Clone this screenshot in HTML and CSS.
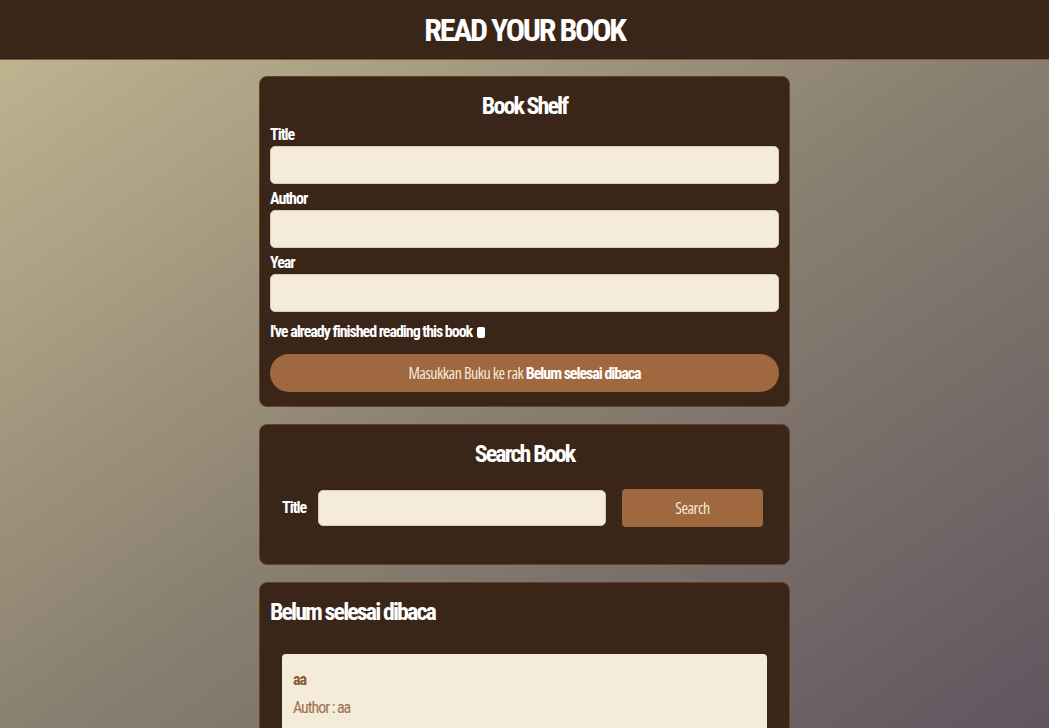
FILE: index.html
```html
<!DOCTYPE html>
<html lang="en">
<head>
<meta charset="utf-8">
<title>Bookshelf Apps</title>
<link rel="stylesheet" href="styles.css">
</head>
<body>
<header class="topbar">
  <h1 class="topbar-title">READ YOUR BOOK</h1>
</header>
<main class="main">
  <section class="card">
    <h2 class="card-title">Book Shelf</h2>
    <form class="book-form">
      <div class="field">
        <label class="field-label" for="inputBookTitle">Title</label>
        <input class="field-input" id="inputBookTitle" type="text">
      </div>
      <div class="field">
        <label class="field-label" for="inputBookAuthor">Author</label>
        <input class="field-input" id="inputBookAuthor" type="text">
      </div>
      <div class="field">
        <label class="field-label" for="inputBookYear">Year</label>
        <input class="field-input" id="inputBookYear" type="number">
      </div>
      <div class="check-row">
        <label class="field-label" for="inputBookIsComplete">I've already finished reading this book</label>
        <input class="check" id="inputBookIsComplete" type="checkbox">
      </div>
      <button class="submit-btn" type="button">Masukkan Buku ke rak <span class="submit-strong">Belum selesai dibaca</span></button>
    </form>
  </section>

  <section class="card">
    <h2 class="card-title">Search Book</h2>
    <form class="search-form">
      <label class="field-label search-label" for="searchBookTitle">Title</label>
      <input class="field-input search-input" id="searchBookTitle" type="text">
      <button class="search-btn" type="button">Search</button>
    </form>
  </section>

  <section class="card">
    <h2 class="card-title card-title-left">Belum selesai dibaca</h2>
    <div class="book-list">
      <article class="book-item">
        <h3 class="book-title">aa</h3>
        <p class="book-meta">Author : aa</p>
      </article>
    </div>
  </section>
</main>
</body>
</html>
```
FILE: styles.css
```css
html {
  min-height: 100%;
  background: linear-gradient(to bottom right, #c2b892 0%, #8b8171 50%, #5f5660 100%) fixed;
}

body {
  margin: 0;
  font-family: Roboto, "Liberation Sans", Arial, sans-serif;
  font-stretch: 75%;
  letter-spacing: -0.065em;
  color: #ffffff;
}

.topbar {
  box-sizing: border-box;
  height: 60px;
  padding: 12px 0 10px;
  background: #3a2618;
  border-bottom: 1px solid #7a5c3e;
  text-align: center;
}

.topbar-title {
  margin: 0;
  font-size: 32px;
  line-height: 37px;
  font-weight: bold;
  letter-spacing: -0.07em;
}

.main {
  width: 531px;
  margin: 16px auto 0;
  display: flex;
  flex-direction: column;
  gap: 17px;
}

.card {
  background: #3a2618;
  border: 1px solid #6b4125;
  border-radius: 8px;
  padding: 10px;
}

.card-title {
  margin: 5px 0 6px;
  font-size: 24px;
  line-height: 28px;
  font-weight: bold;
  letter-spacing: -0.08em;
  text-align: center;
}

.card-title-left {
  text-align: left;
}

.book-form {
  display: flex;
  flex-direction: column;
}

.field {
  display: flex;
  flex-direction: column;
  gap: 2px;
  margin-bottom: 6px;
}

.field-label {
  font-size: 16px;
  line-height: 18px;
  font-weight: bold;
}

.field-input {
  box-sizing: border-box;
  height: 38px;
  margin: 0;
  padding: 0 10px;
  background: #f4ebd9;
  border: 1px solid #d8ccb3;
  border-radius: 5px;
  font-family: inherit;
  font-size: 16px;
  color: #3a2618;
}

.check-row {
  display: flex;
  align-items: center;
  margin-top: 5px;
}

.check {
  appearance: none;
  -webkit-appearance: none;
  width: 8px;
  height: 11px;
  margin: 0 0 0 5px;
  background: #ffffff;
  border-radius: 2px;
}

.submit-btn {
  height: 38px;
  margin: 13px 0 4px;
  background: #a0683f;
  border: none;
  border-radius: 19px;
  color: #f4ebd9;
  font-family: "Open Sans", sans-serif;
  font-stretch: 75%;
  font-size: 16px;
  letter-spacing: -0.03em;
}

.submit-strong {
  font-family: Roboto, "Liberation Sans", Arial, sans-serif;
  font-weight: bold;
  letter-spacing: -0.065em;
  color: #ffffff;
}

.search-form {
  display: flex;
  align-items: center;
  padding: 15px 16px 27px 12px;
}

.search-label {
  margin-right: 12px;
}

.search-input {
  flex: 1;
  height: 36px;
  margin-right: 16px;
}

.search-btn {
  width: 141px;
  height: 38px;
  background: #a0683f;
  border: none;
  border-radius: 4px;
  color: #f4ebd9;
  font-family: "Open Sans", sans-serif;
  font-stretch: 75%;
  font-size: 16px;
  letter-spacing: -0.03em;
}

.book-list {
  padding: 22px 12px 0;
}

.book-item {
  background: #f4ebd9;
  border-radius: 4px;
  padding: 17px 11px 16px;
}

.book-title {
  margin: 0 0 10px;
  font-size: 16px;
  line-height: 18px;
  font-weight: bold;
  color: #8b5a3c;
}

.book-meta {
  margin: 0;
  font-size: 16px;
  line-height: 18px;
  color: #a0714f;
}
```
